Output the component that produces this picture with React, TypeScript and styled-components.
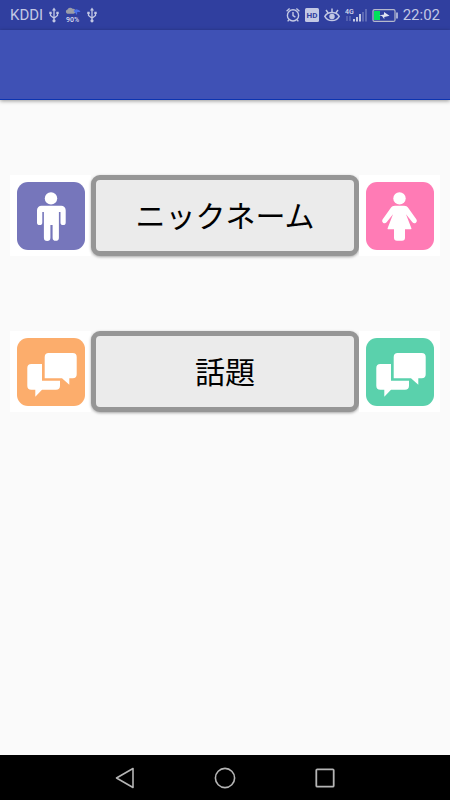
import React from "react";
import styled, { createGlobalStyle } from "styled-components";

const GlobalStyle = createGlobalStyle`
  * { box-sizing: border-box; }
  body {
    margin: 0;
    background: #fafafa;
    font-family: Roboto, "Noto Sans CJK JP", sans-serif;
  }
`;

const Screen = styled.div`
  min-height: 100vh;
  display: flex;
  flex-direction: column;
`;

const StatusBar = styled.div`
  height: 30px;
  padding: 0 10px;
  display: flex;
  align-items: center;
  justify-content: space-between;
  background: #303f9f;
  color: #c3c8e4;
  font-size: 15px;
  line-height: 30px;
`;

const StatusGroup = styled.div<{ $gap: number }>`
  display: flex;
  align-items: center;
  gap: ${(p) => p.$gap}px;

  svg { display: block; }
`;

const AppBar = styled.header`
  height: 70px;
  background: #3f51b5;
  border-bottom: 1px solid #0c34b0;
  box-shadow: 0 1px 4px rgba(0, 0, 0, 0.4);
`;

const Content = styled.main`
  flex: 1;
  padding: 75px 10px;
  display: flex;
  flex-direction: column;
  gap: 75px;
`;

const Row = styled.section`
  display: flex;
`;

const IconTile = styled.div`
  width: 81px;
  height: 81px;
  flex: none;
  background: #fff;

  svg { display: block; }
`;

const ChoiceButton = styled.button`
  flex: 1;
  height: 81px;
  padding: 0 0 4px;
  border: 5px solid #969696;
  border-radius: 9px;
  background: #ebebeb;
  box-shadow: 0 1px 3px rgba(0, 0, 0, 0.35);
  color: #000;
  font-family: "Noto Sans CJK JP", sans-serif;
  font-size: 30px;
  line-height: 40px;
`;

const NavBar = styled.nav`
  height: 45px;
  display: flex;
  align-items: center;
  justify-content: center;
  gap: 60px;
  background: #000;
`;

const NavButton = styled.button`
  width: 40px;
  height: 45px;
  padding: 0;
  border: 0;
  display: flex;
  align-items: center;
  justify-content: center;
  background: none;
`;

const UsbIcon = () => (
  <svg width="10" height="16" viewBox="0 0 10 16" fill="none" stroke="#c3c8e4" strokeWidth="1.3">
    <path d="M5 2v12M1.5 6v2.5L5 11.2M8.5 6v2.5L5 11.2" />
    <path d="M3 3.4 5 .6l2 2.8z" fill="#c3c8e4" stroke="none" />
    <circle cx="5" cy="13.8" r="1.6" fill="#c3c8e4" stroke="none" />
    <path d="M.3 4.8h2.4v2.2H.3zM7.3 4.8h2.4v2.2H7.3z" fill="#c3c8e4" stroke="none" />
  </svg>
);

const WeatherIcon = () => (
  <svg width="16" height="16" viewBox="0 0 16 16">
    <path d="M2.5 6.8a2.3 2.3 0 0 1 0-4.4 3 3 0 0 1 5-.6 2.5 2.5 0 0 1 1 5z" fill="#9b9da8" />
    <path d="M8.5 4A4 4 0 0 1 15.5 5L12.5 5l-1.6 1.4z" fill="#4b70e8" />
    <path d="M11.5 5v2.4" stroke="#4b70e8" strokeWidth="1.2" />
    <text x="1" y="15" fill="#d9dcef" fontFamily="Roboto, sans-serif" fontSize="7" fontWeight="500">90%</text>
  </svg>
);

const AlarmIcon = () => (
  <svg width="14" height="16" viewBox="0 0 14 16" fill="none" stroke="#c3c8e4" strokeWidth="1.4">
    <circle cx="7" cy="8.4" r="5.6" />
    <path d="M7 5v3.6l2.4 1.6M.6 4.2 3.6 1.4M13.4 4.2l-3-2.8M3 12.6l-1.3 1.8M11 12.6l1.3 1.8" />
  </svg>
);

const HdIcon = () => (
  <svg width="14" height="14" viewBox="0 0 14 14">
    <rect width="14" height="14" rx="1.5" fill="#c3c8e4" />
    <text x="7" y="10" textAnchor="middle" fill="#303f9f" fontFamily="Roboto, sans-serif" fontSize="8" fontWeight="700">HD</text>
  </svg>
);

const EyeIcon = () => (
  <svg width="16" height="16" viewBox="0 0 16 16" fill="none" stroke="#c3c8e4" strokeWidth="1.5">
    <path d="M.8 9.3C4 4.2 12 4.2 15.2 9.3 12 15 4 15 .8 9.3z" />
    <circle cx="8" cy="9.4" r="2" fill="#c3c8e4" />
    <path d="M8 5V1.5M4.2 6 2 3M11.8 6 14 3" />
  </svg>
);

const SignalIcon = () => (
  <svg width="22" height="16" viewBox="0 0 22 16">
    <text x="0" y="7" fill="#d9dcef" fontFamily="Roboto, sans-serif" fontSize="7" fontWeight="500">4G</text>
    <path d="M2 9v5M5 9v5" stroke="#6a75bb" strokeWidth="1.2" />
    <path d="M9 12v2.5M12 10v4.5M15 7v7.5" stroke="#c3c8e4" strokeWidth="2" />
    <path d="M18 5v9.5M21 2v12.5" stroke="#6a75bb" strokeWidth="1.6" />
  </svg>
);

const BatteryIcon = () => (
  <svg width="26" height="13" viewBox="0 0 26 13">
    <rect x="1" y=".6" width="22" height="11.8" rx="1.5" fill="none" stroke="#b5b9cc" strokeWidth="1.2" />
    <rect x="2" y="2" width="6" height="9" fill="#00e05a" />
    <path d="M25 3.5v6" stroke="#c3c8e4" strokeWidth="1.6" />
    <path d="M7 6.5 12 5.4V3l5.5 3.7-5.2 1.2v2.4L10 7z" fill="#e3e5f2" />
  </svg>
);

const TileArt = ({ color, children }: { color: string; children: React.ReactNode }) => (
  <IconTile>
    <svg width="81" height="81" viewBox="0 0 81 81" aria-hidden="true">
      <rect x="7" y="7" width="68" height="68" rx="11" fill={color} />
      <g fill="#fff">{children}</g>
    </svg>
  </IconTile>
);

const Man = () => (
  <>
    <circle cx="41" cy="23.4" r="6.2" />
    <path d="M31.5 30.7h19.7a4.5 4.5 0 0 1 4.5 4.5v12.2a2.6 2.6 0 0 1-5.2 0V37h-1.6v25.7a3.1 3.1 0 0 1-6.3 0V50h-2.2v12.7a3.2 3.2 0 0 1-6.5 0V37h-1.6v10.4a2.6 2.6 0 0 1-5.3 0V35.2a4.5 4.5 0 0 1 4.5-4.5z" />
  </>
);

const Woman = () => (
  <>
    <circle cx="40.5" cy="23.4" r="6.2" />
    <path d="M36 30.7h9c2 0 3.3.8 4.3 2.3l8 11.3c1.8 2.8-1.7 5.5-3.9 3L47 39.2l5.4 14.1c.2.6-.1 1-.7 1H46v8.4c0 2-1 3-3 3h-5c-2 0-3-1-3-3v-8.4h-5.7c-.6 0-.9-.4-.7-1L34 39.2l-6.4 8.1c-2.2 2.5-5.7-.2-3.9-3l8-11.3c1-1.5 2.3-2.3 4.3-2.3z" />
  </>
);

const Chat = () => (
  <>
    <path d="M38.7 22H62.7a4 4 0 0 1 4 4v17.3a4 4 0 0 1-4 4h-3.4v6.4L52 47.3H34.7V26a4 4 0 0 1 4-4z" />
    <path d="M21.3 33H32v16.7h18V54.7a4 4 0 0 1-4 4H32l-6.7 7v-7h-4a4 4 0 0 1-4-4V37a4 4 0 0 1 4-4z" />
  </>
);

export default function App() {
  return (
    <Screen>
      <GlobalStyle />
      <StatusBar>
        <StatusGroup $gap={6}>
          <span>KDDI</span>
          <UsbIcon />
          <WeatherIcon />
          <UsbIcon />
        </StatusGroup>
        <StatusGroup $gap={5}>
          <AlarmIcon />
          <HdIcon />
          <EyeIcon />
          <SignalIcon />
          <BatteryIcon />
          <span>22:02</span>
        </StatusGroup>
      </StatusBar>
      <AppBar />
      <Content>
        <Row>
          <TileArt color="#7676bb"><Man /></TileArt>
          <ChoiceButton type="button">ニックネーム</ChoiceButton>
          <TileArt color="#ff7bb5"><Woman /></TileArt>
        </Row>
        <Row>
          <TileArt color="#fcad6c"><Chat /></TileArt>
          <ChoiceButton type="button">話題</ChoiceButton>
          <TileArt color="#5ad1ac"><Chat /></TileArt>
        </Row>
      </Content>
      <NavBar>
        <NavButton type="button" aria-label="Back">
          <svg width="20" height="22" viewBox="0 0 20 22" fill="none" stroke="#b5b5b5" strokeWidth="1.6" strokeLinejoin="round">
            <path d="M18 1.5v19L1.5 11z" />
          </svg>
        </NavButton>
        <NavButton type="button" aria-label="Home">
          <svg width="22" height="22" viewBox="0 0 22 22" fill="none" stroke="#b5b5b5" strokeWidth="1.6">
            <circle cx="11" cy="11" r="9.6" />
          </svg>
        </NavButton>
        <NavButton type="button" aria-label="Recent apps">
          <svg width="20" height="20" viewBox="0 0 20 20" fill="none" stroke="#b5b5b5" strokeWidth="1.8">
            <rect x="1.3" y="1.3" width="17.4" height="17.4" rx="1" />
          </svg>
        </NavButton>
      </NavBar>
    </Screen>
  );
}
